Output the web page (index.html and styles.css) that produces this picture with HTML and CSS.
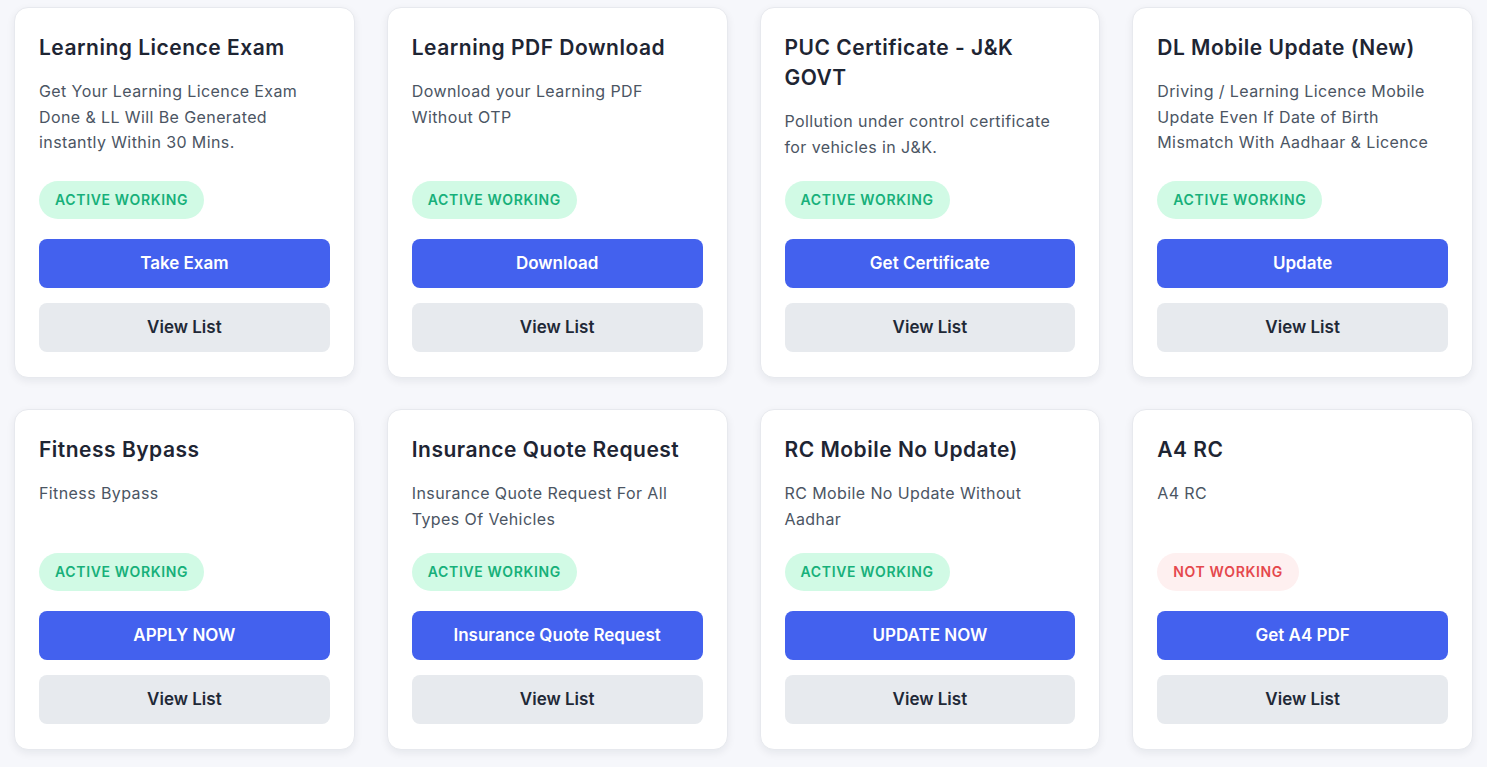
FILE: index.html
```html
<!DOCTYPE html>
<html lang="en">
<head>
<meta charset="utf-8">
<title>Services</title>
<link rel="stylesheet" href="styles.css">
</head>
<body>
<main class="page">
  <div class="grid">
    <article class="card">
      <h3 class="card-title">Learning Licence Exam</h3>
      <p class="card-desc">Get Your Learning Licence Exam Done &amp; LL Will Be Generated instantly Within 30 Mins.</p>
      <div class="card-foot">
        <span class="badge badge-ok">Active Working</span>
        <a class="btn btn-primary">Take Exam</a>
        <a class="btn btn-light">View List</a>
      </div>
    </article>
    <article class="card">
      <h3 class="card-title">Learning PDF Download</h3>
      <p class="card-desc">Download your Learning PDF Without OTP</p>
      <div class="card-foot">
        <span class="badge badge-ok">Active Working</span>
        <a class="btn btn-primary">Download</a>
        <a class="btn btn-light">View List</a>
      </div>
    </article>
    <article class="card">
      <h3 class="card-title">PUC Certificate - J&amp;K GOVT</h3>
      <p class="card-desc">Pollution under control certificate for vehicles in J&amp;K.</p>
      <div class="card-foot">
        <span class="badge badge-ok">Active Working</span>
        <a class="btn btn-primary">Get Certificate</a>
        <a class="btn btn-light">View List</a>
      </div>
    </article>
    <article class="card">
      <h3 class="card-title">DL Mobile Update (New)</h3>
      <p class="card-desc">Driving / Learning Licence Mobile Update Even If Date of Birth Mismatch With Aadhaar &amp; Licence</p>
      <div class="card-foot">
        <span class="badge badge-ok">Active Working</span>
        <a class="btn btn-primary">Update</a>
        <a class="btn btn-light">View List</a>
      </div>
    </article>
    <article class="card">
      <h3 class="card-title">Fitness Bypass</h3>
      <p class="card-desc">Fitness Bypass</p>
      <div class="card-foot">
        <span class="badge badge-ok">Active Working</span>
        <a class="btn btn-primary">APPLY NOW</a>
        <a class="btn btn-light">View List</a>
      </div>
    </article>
    <article class="card">
      <h3 class="card-title">Insurance Quote Request</h3>
      <p class="card-desc">Insurance Quote Request For All Types Of Vehicles</p>
      <div class="card-foot">
        <span class="badge badge-ok">Active Working</span>
        <a class="btn btn-primary">Insurance Quote Request</a>
        <a class="btn btn-light">View List</a>
      </div>
    </article>
    <article class="card">
      <h3 class="card-title">RC Mobile No Update)</h3>
      <p class="card-desc">RC Mobile No Update Without Aadhar</p>
      <div class="card-foot">
        <span class="badge badge-ok">Active Working</span>
        <a class="btn btn-primary">UPDATE NOW</a>
        <a class="btn btn-light">View List</a>
      </div>
    </article>
    <article class="card">
      <h3 class="card-title">A4 RC</h3>
      <p class="card-desc">A4 RC</p>
      <div class="card-foot">
        <span class="badge badge-bad">Not Working</span>
        <a class="btn btn-primary">Get A4 PDF</a>
        <a class="btn btn-light">View List</a>
      </div>
    </article>
  </div>
</main>
</body>
</html>
```
FILE: styles.css
```css
html, body {
  margin: 0;
  padding: 0;
  background: #ffffff;
}

body {
  font-family: Inter, "Noto Sans", sans-serif;
  color: #1f2937;
}

.page {
  width: 1487px;
  min-height: 900px;
  background: #f6f7fb;
  padding: 7px 14px 40px;
  box-sizing: border-box;
}

.grid {
  display: grid;
  grid-template-columns: repeat(4, 1fr);
  column-gap: 32px;
  row-gap: 31px;
}

.card {
  background: #ffffff;
  border: 1px solid #e7e9ee;
  border-radius: 14px;
  box-shadow: 0 3px 8px rgba(17, 24, 39, 0.07);
  padding: 25px 24px 25px;
  display: flex;
  flex-direction: column;
}

.card-title {
  margin: 0 0 16px;
  font-size: 21px;
  line-height: 30px;
  font-weight: 600;
  letter-spacing: 0.5px;
  color: #1e2533;
}

.card-desc {
  margin: 0 0 21px;
  font-size: 16px;
  line-height: 25.6px;
  letter-spacing: 0.4px;
  color: #4b5563;
  flex: 1;
}

.card-foot {
  display: flex;
  flex-direction: column;
  align-items: stretch;
}

.badge {
  align-self: flex-start;
  height: 38px;
  line-height: 38px;
  padding: 0 16px;
  border-radius: 999px;
  font-size: 14px;
  font-weight: 600;
  letter-spacing: 0.65px;
  text-transform: uppercase;
  margin-bottom: 20px;
}

.badge-ok {
  background: #d1fae5;
  color: #17b07a;
}

.badge-bad {
  background: #fef0f0;
  color: #e5484d;
}

.btn {
  display: block;
  height: 49px;
  line-height: 49px;
  border-radius: 8px;
  text-align: center;
  font-size: 17px;
  font-weight: 600;
  cursor: pointer;
}

.btn-primary {
  background: #4361ee;
  color: #ffffff;
  margin-bottom: 15px;
}

.btn-light {
  background: #e7eaee;
  color: #1f2937;
}
```
